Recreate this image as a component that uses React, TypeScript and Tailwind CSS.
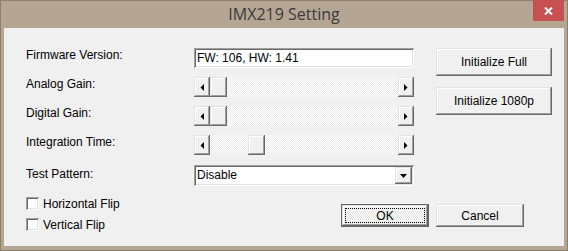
import React from "react";

const raised =
  "shadow-[inset_-1px_-1px_#696969,inset_1px_1px_#e3e3e3,inset_-2px_-2px_#a0a0a0,inset_2px_2px_#ffffff]";
const sunken =
  "shadow-[inset_1px_1px_#a0a0a0,inset_-1px_-1px_#ffffff,inset_2px_2px_#696969,inset_-2px_-2px_#e3e3e3]";

function LeftArrow() {
  return (
    <svg width="4" height="7" viewBox="0 0 4 7">
      <polygon points="4,0 4,7 0.5,3.5" fill="#000" />
    </svg>
  );
}
function RightArrow() {
  return (
    <svg width="4" height="7" viewBox="0 0 4 7">
      <polygon points="0,0 0,7 3.5,3.5" fill="#000" />
    </svg>
  );
}
function DownArrow() {
  return (
    <svg width="7" height="4" viewBox="0 0 7 4">
      <polygon points="0,0 7,0 3.5,4" fill="#000" />
    </svg>
  );
}

function ScrollBar({ thumb }: { thumb: number }) {
  return (
    <div className="flex h-[20px] w-[220px]">
      <div className={`w-[16px] h-full bg-[#f0f0f0] flex items-center justify-center ${raised}`}>
        <LeftArrow />
      </div>
      <div className="flex-1 h-full bg-[image:repeating-conic-gradient(#ffffff_0%_25%,#ebebeb_0%_50%)] bg-[length:2px_2px] flex">
        <div style={{ width: thumb }} />
        <div className={`w-[17px] h-full bg-[#f0f0f0] ${raised}`} />
      </div>
      <div className={`w-[16px] h-full bg-[#f0f0f0] flex items-center justify-center ${raised}`}>
        <RightArrow />
      </div>
    </div>
  );
}

function Label({ children }: { children: React.ReactNode }) {
  return <div className="w-[168px] h-[20px] text-[12px] leading-[14px] text-black">{children}</div>;
}

function CheckRow({ label }: { label: string }) {
  return (
    <div className="flex items-center h-[13px] gap-[4px]">
      <div className={`w-[13px] h-[13px] bg-white ${sunken}`} />
      <span className="text-[12px] leading-[14px] text-black">{label}</span>
    </div>
  );
}

export default function App() {
  return (
    <div className="w-[568px] h-[251px] bg-[#b5a593] border border-[#8e8070] flex flex-col relative font-['Liberation_Sans',Arial,sans-serif] select-none">
      <div className="h-[27px] flex justify-center">
        <span className="font-['Open_Sans',sans-serif] text-[16px] leading-[27px] text-[#3a3a3a]">
          IMX219 Setting
        </span>
      </div>
      <div className="absolute -top-px right-[3px] w-[31px] h-[21px] bg-[#c75050] flex items-center justify-center">
        <svg width="9" height="8" viewBox="0 0 9 8">
          <path d="M1 0.5 L8 7.5 M8 0.5 L1 7.5" stroke="#fff" strokeWidth="2" />
        </svg>
      </div>
      <div className="mx-[3px] mb-[4px] flex-1 bg-[#f0f0f0] pt-[20px] pl-[22px] flex flex-col">
        <div className="flex">
          <div className="flex flex-col">
            <div className="flex">
              <Label>Firmware Version:</Label>
              <div className={`w-[220px] h-[20px] bg-white flex items-center pl-[3px] ${sunken}`}>
                <span className="text-[12px] leading-[20px] text-black">FW: 106, HW: 1.41</span>
              </div>
            </div>
            <div className="flex mt-[9px]">
              <Label>Analog Gain:</Label>
              <ScrollBar thumb={0} />
            </div>
            <div className="flex mt-[9px]">
              <Label>Digital Gain:</Label>
              <ScrollBar thumb={0} />
            </div>
            <div className="flex mt-[9px]">
              <Label>Integration Time:</Label>
              <ScrollBar thumb={38} />
            </div>
            <div className="flex mt-[10px]">
              <div className="w-[168px] h-[21px] text-[12px] leading-[14px] pt-[2px] text-black">Test Pattern:</div>
              <div className={`w-[220px] h-[21px] bg-white flex items-center pl-[3px] pr-[2px] ${sunken}`}>
                <span className="flex-1 text-[12px] leading-[21px] text-black">Disable</span>
                <div className={`w-[17px] h-[17px] bg-[#f0f0f0] flex items-center justify-center ${raised}`}>
                  <DownArrow />
                </div>
              </div>
            </div>
          </div>
          <div className="ml-[22px] w-[116px] flex flex-col gap-[11px]">
            <div className={`h-[28px] bg-[#f0f0f0] flex items-center justify-center text-[12px] text-black ${raised}`}>
              Initialize Full
            </div>
            <div className={`h-[28px] bg-[#f0f0f0] flex items-center justify-center text-[12px] text-black ${raised}`}>
              Initialize 1080p
            </div>
          </div>
        </div>
        <div className="flex mt-[11px]">
          <div className="w-[315px] flex flex-col gap-[8px]">
            <CheckRow label="Horizontal Flip" />
            <CheckRow label="Vertical Flip" />
          </div>
          <div className="mt-[7px] flex gap-[7px]">
            <div className="w-[88px] h-[23px] border border-[#646464] bg-[#f0f0f0]">
              <div className={`w-full h-full p-[3px] flex ${raised}`}>
                <div className="flex-1 border border-dotted border-black flex items-center justify-center text-[12px] text-black">
                  OK
                </div>
              </div>
            </div>
            <div className={`w-[88px] h-[23px] bg-[#f0f0f0] flex items-center justify-center text-[12px] text-black ${raised}`}>
              Cancel
            </div>
          </div>
        </div>
      </div>
    </div>
  );
}
